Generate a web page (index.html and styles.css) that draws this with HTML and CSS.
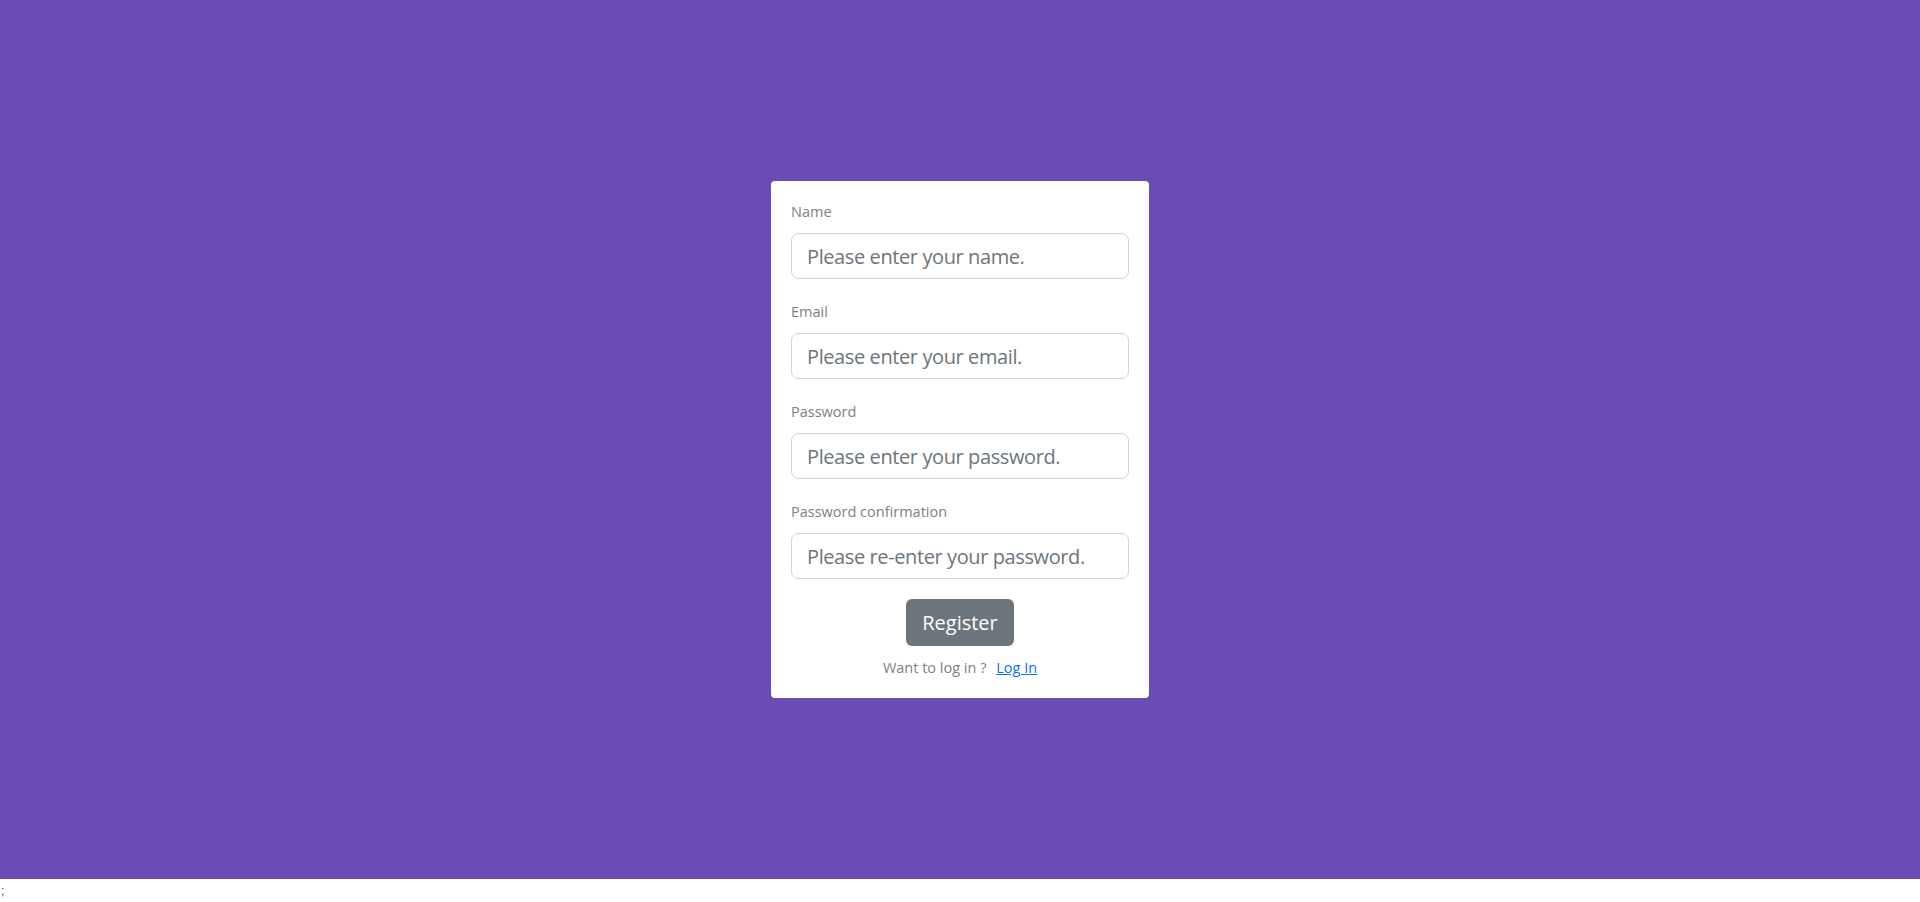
FILE: index.html
```html
<!DOCTYPE html>
<html lang="en">
<head>
<meta charset="utf-8">
<title>Register</title>
<link rel="stylesheet" href="styles.css">
</head>
<body>
<div class="page">
  <form class="card">
    <div class="group">
      <label class="label" for="name">Name</label>
      <input class="input" id="name" type="text" placeholder="Please enter your name.">
    </div>
    <div class="group">
      <label class="label" for="email">Email</label>
      <input class="input" id="email" type="email" placeholder="Please enter your email.">
    </div>
    <div class="group">
      <label class="label" for="password">Password</label>
      <input class="input" id="password" type="password" placeholder="Please enter your password.">
    </div>
    <div class="group last">
      <label class="label" for="confirm">Password confirmation</label>
      <input class="input" id="confirm" type="password" placeholder="Please re-enter your password.">
    </div>
    <div class="actions">
      <button class="btn" type="button">Register</button>
      <p class="login">Want to log in ? <a class="link" href="#">Log In</a></p>
    </div>
  </form>
</div>
<div class="trail">;</div>
</body>
</html>
```
FILE: styles.css
```css
* { box-sizing: border-box; }
body {
  margin: 0;
  font-family: "Open Sans", "Noto Sans", sans-serif;
  background: #fff;
}
.page {
  height: 879px;
  background: #6b4bb4;
  display: flex;
  align-items: center;
  justify-content: center;
}
.card {
  width: 378px;
  background: #fff;
  border-radius: 4px;
  padding: 20px 20px 20px;
  display: flex;
  flex-direction: column;
}
.group {
  display: flex;
  flex-direction: column;
  margin-bottom: 22px;
}
.group.last { margin-bottom: 0; }
.label {
  font-size: 14.5px;
  line-height: 21px;
  color: #808080;
  margin-bottom: 11px;
}
.input {
  height: 46px;
  width: 100%;
  border: 1px solid #ced4da;
  border-radius: 7px;
  padding: 0 15px;
  font-family: inherit;
  font-size: 20px;
  letter-spacing: -0.4px;
  color: #495057;
  background: #fff;
  outline: none;
}
.input::placeholder { color: #6c757d; opacity: 1; }
.actions {
  display: flex;
  flex-direction: column;
  align-items: center;
  margin-top: 20px;
}
.btn {
  height: 47px;
  padding: 0 16px;
  border: none;
  border-radius: 6px;
  background: #6c757d;
  color: #fff;
  font-family: inherit;
  font-size: 20px;
  cursor: pointer;
}
.login {
  margin: 11px 0 0;
  font-size: 14.5px;
  line-height: 21px;
  color: #808080;
}
.link {
  color: #0d6efd;
  text-decoration: underline;
  margin-left: 6px;
}
.trail {
  font-family: "Liberation Sans", sans-serif;
  font-size: 12px;
  color: #555;
  line-height: 14px;
  padding-top: 5px;
  padding-left: 1px;
}
```
